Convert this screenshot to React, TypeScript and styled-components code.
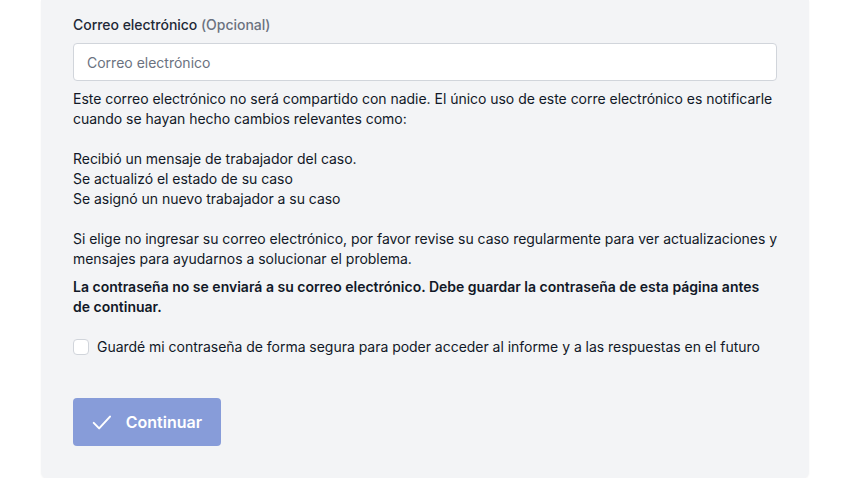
import React from 'react';
import styled, { createGlobalStyle } from 'styled-components';

const Global = createGlobalStyle`
  body {
    margin: 0;
    background: #ffffff;
    font-family: Inter, "Noto Sans", sans-serif;
    color: #111827;
    letter-spacing: -0.03px;
  }
`;

const Panel = styled.div`
  margin-left: 41px;
  width: 768px;
  box-sizing: border-box;
  background: #f3f4f6;
  border-radius: 0 0 6px 6px;
  box-shadow: 0 1px 2px rgba(0, 0, 0, 0.05);
  padding: 15px 32px 32px 32px;
`;

const Label = styled.label`
  display: block;
  font-size: 14px;
  line-height: 20px;
  font-weight: 500;
  color: #1f2937;
`;

const Optional = styled.span`
  color: #6b7280;
  font-weight: 500;
`;

const Input = styled.input`
  display: block;
  width: 100%;
  box-sizing: border-box;
  height: 38px;
  margin-top: 8px;
  padding: 0 13px;
  border: 1px solid #d1d5db;
  border-radius: 4px;
  background: #ffffff;
  font-family: inherit;
  font-size: 14px;
  color: #111827;
  &::placeholder {
    color: #6b7280;
  }
`;

const Help = styled.div`
  margin-top: 8px;
  font-size: 14px;
  line-height: 20px;
  color: #111827;
`;

const Para = styled.p<{ $gap?: number }>`
  margin: ${p => p.$gap ?? 0}px 0 0 0;
`;

const Warning = styled.p`
  margin: 8px 0 0 0;
  font-size: 14px;
  line-height: 20px;
  font-weight: 600;
  letter-spacing: 0;
  color: #111827;
`;

const CheckRow = styled.label`
  display: flex;
  align-items: center;
  gap: 8px;
  margin-top: 20px;
  font-size: 14px;
  line-height: 20px;
  color: #111827;
`;

const Box = styled.span`
  width: 16px;
  height: 16px;
  box-sizing: border-box;
  border: 1px solid #d1d5db;
  border-radius: 4px;
  background: #ffffff;
  flex: none;
`;

const Button = styled.button`
  display: flex;
  align-items: center;
  gap: 13px;
  margin-top: 41px;
  height: 48px;
  padding: 0 19px 0 18px;
  width: 148px;
  border: none;
  border-radius: 4px;
  background: #879cd9;
  color: #ffffff;
  font-family: inherit;
  font-size: 16px;
  font-weight: 600;
  cursor: not-allowed;
`;

const CheckIcon = () => (
  <svg width="24" height="24" viewBox="0 0 24 24" fill="none" stroke="#ffffff" strokeWidth="2.2" strokeLinecap="round" strokeLinejoin="round">
    <path d="M3 13l6 6L21 6" />
  </svg>
);

export default function App() {
  return (
    <>
      <Global />
      <Panel>
        <Label>
          Correo electrónico <Optional>(Opcional)</Optional>
        </Label>
        <Input placeholder="Correo electrónico" />
        <Help>
          <Para>
            Este correo electrónico no será compartido con nadie. El único uso de este corre electrónico es notificarle
            cuando se hayan hecho cambios relevantes como:
          </Para>
          <Para $gap={20}>
            Recibió un mensaje de trabajador del caso.
            <br />
            Se actualizó el estado de su caso
            <br />
            Se asignó un nuevo trabajador a su caso
          </Para>
          <Para $gap={20}>
            Si elige no ingresar su correo electrónico, por favor revise su caso regularmente para ver actualizaciones y
            mensajes para ayudarnos a solucionar el problema.
          </Para>
        </Help>
        <Warning>
          La contraseña no se enviará a su correo electrónico. Debe guardar la contraseña de esta página antes de
          continuar.
        </Warning>
        <CheckRow>
          <Box />
          Guardé mi contraseña de forma segura para poder acceder al informe y a las respuestas en el futuro
        </CheckRow>
        <Button disabled>
          <CheckIcon />
          Continuar
        </Button>
      </Panel>
    </>
  );
}
